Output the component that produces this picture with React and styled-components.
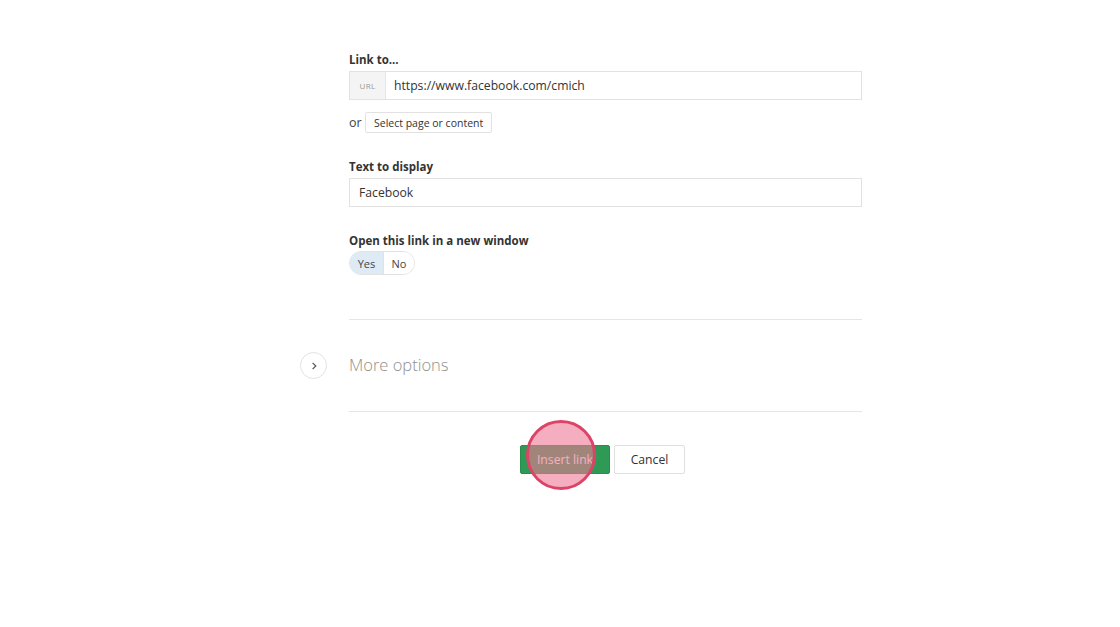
import { styled, createGlobalStyle } from "styled-components";

const GlobalStyle = createGlobalStyle`
	html, body {
		margin: 0;
		padding: 0;
		background: #fff;
	}
	body {
		font-family: "Open Sans", "Liberation Sans", sans-serif;
		color: #333;
	}
`;

const App = () => {
	return (
		<>
			<GlobalStyle />
			<Page>
				<Form>
					<Field $gap={25}>
						<Label>Link to...</Label>
						<InputGroup>
							<Addon>URL</Addon>
							<InputText>https://www.facebook.com/cmich</InputText>
						</InputGroup>
						<OrRow>
							<OrText>or</OrText>
							<SmallButton>Select page or content</SmallButton>
						</OrRow>
					</Field>

					<Field $gap={25}>
						<Label>Text to display</Label>
						<InputGroup>
							<InputText $pad={9}>Facebook</InputText>
						</InputGroup>
					</Field>

					<Field $gap={44}>
						<Label>Open this link in a new window</Label>
						<Toggle>
							<ToggleOption $active>Yes</ToggleOption>
							<ToggleOption>No</ToggleOption>
						</Toggle>
					</Field>

					<MoreOptions>
						<ExpandCircle>
							<svg width="10" height="10" viewBox="0 0 10 10">
								<path
									d="M3.6 1.8 L6.8 5 L3.6 8.2"
									fill="none"
									stroke="#555"
									strokeWidth="1.2"
								/>
							</svg>
						</ExpandCircle>
						<MoreText>More options</MoreText>
					</MoreOptions>

					<Actions>
						<PrimaryButton>
							Insert link
							<ClickMarker />
						</PrimaryButton>
						<SecondaryButton>Cancel</SecondaryButton>
					</Actions>
				</Form>
			</Page>
		</>
	);
};

const Page = styled.div`
	width: 1120px;
	height: 627px;
	display: flex;
	padding: 51px 0 0 349px;
	box-sizing: border-box;
`;

const Form = styled.div`
	width: 513px;
	display: flex;
	flex-direction: column;
`;

const Field = styled.div`
	display: flex;
	flex-direction: column;
	margin-bottom: ${(p) => p.$gap}px;
`;

const Label = styled.div`
	font-size: 11.5px;
	font-weight: 700;
	color: #333;
	line-height: 17px;
	margin-bottom: 3px;
`;

const InputGroup = styled.div`
	display: flex;
	height: 29px;
	border: 1px solid #e2e2e2;
	box-sizing: border-box;
	background: #fff;
`;

const Addon = styled.div`
	width: 35px;
	background: #f4f4f4;
	border-right: 1px solid #e6e6e6;
	display: flex;
	align-items: center;
	justify-content: center;
	font-size: 8px;
	color: #999;
	letter-spacing: 0.3px;
`;

const InputText = styled.div`
	display: flex;
	align-items: center;
	padding-left: ${(p) => p.$pad || 8}px;
	font-size: 12.2px;
	color: #333;
`;

const OrRow = styled.div`
	display: flex;
	align-items: center;
	margin-top: 12px;
	gap: 3px;
`;

const OrText = styled.span`
	font-size: 12.5px;
	color: #444;
	margin-top: -1px;
	width: 13px;
`;

const SmallButton = styled.div`
	height: 21px;
	padding: 0 8px;
	border: 1px solid #e2e2e2;
	border-radius: 2px;
	box-sizing: border-box;
	display: flex;
	align-items: center;
	font-size: 10.5px;
	color: #333;
	background: #fff;
`;

const Toggle = styled.div`
	display: flex;
	align-self: flex-start;
	height: 24px;
	border: 1px solid #e2e2e2;
	border-radius: 12px;
	overflow: hidden;
	box-sizing: border-box;
	margin-top: -1px;
`;

const ToggleOption = styled.div`
	display: flex;
	align-items: center;
	justify-content: center;
	width: ${(p) => (p.$active ? 33 : 30)}px;
	font-size: 11px;
	color: #444;
	background: ${(p) => (p.$active ? "#deeaf4" : "#fff")};
	border-right: ${(p) => (p.$active ? "1px solid #e2e2e2" : "none")};
`;

const MoreOptions = styled.div`
	position: relative;
	height: 91px;
	border-top: 1px solid #e6e6e6;
	border-bottom: 1px solid #e6e6e6;
	display: flex;
	align-items: center;
`;

const ExpandCircle = styled.div`
	position: absolute;
	left: -49px;
	top: 32px;
	width: 25px;
	height: 25px;
	border: 1px solid #e2e2e2;
	border-radius: 50%;
	display: flex;
	align-items: center;
	justify-content: center;
`;

const MoreText = styled.div`
	font-size: 16.5px;
	font-weight: 300;
	color: #909090;
	margin-top: -3px;
`;

const Actions = styled.div`
	display: flex;
	justify-content: center;
	gap: 4px;
	margin-top: 33px;
	margin-left: -6px;
`;

const BaseButton = styled.div`
	position: relative;
	height: 29px;
	box-sizing: border-box;
	display: flex;
	align-items: center;
	justify-content: center;
	font-size: 12.2px;
	border-radius: 2px;
`;

const PrimaryButton = styled(BaseButton)`
	width: 90px;
	background: #2f9a56;
	color: #fff;
	border: 1px solid #2a8c4d;
`;

const SecondaryButton = styled(BaseButton)`
	width: 71px;
	background: #fff;
	color: #333;
	border: 1px solid #e0e0e0;
`;

const ClickMarker = styled.div`
	position: absolute;
	left: 5px;
	top: -26px;
	width: 70px;
	height: 70px;
	box-sizing: border-box;
	border-radius: 50%;
	border: 3px solid #dc4467;
	background: rgba(238, 120, 148, 0.6);
`;

export default App;
